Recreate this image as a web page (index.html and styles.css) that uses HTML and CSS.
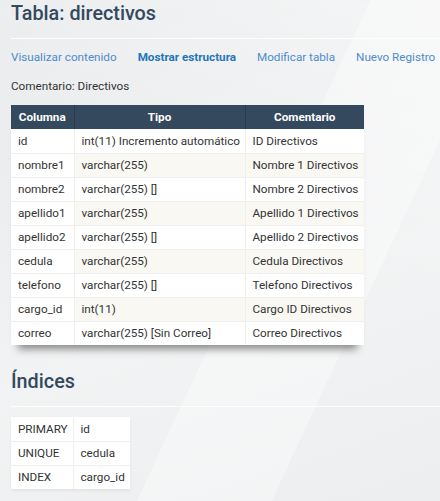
FILE: index.html
```html
<!DOCTYPE html>
<html lang="es">
<head>
<meta charset="utf-8">
<title>Tabla: directivos</title>
<link rel="stylesheet" href="styles.css">
</head>
<body>
<div class="page">
  <h1 class="title">Tabla: directivos</h1>
  <nav class="tabs">
    <a class="tab">Visualizar contenido</a>
    <a class="tab active">Mostrar estructura</a>
    <a class="tab">Modificar tabla</a>
    <a class="tab">Nuevo Registro</a>
  </nav>
  <p class="comment">Comentario: Directivos</p>
  <table class="grid structure">
    <thead>
      <tr><th class="c1">Columna</th><th class="c2">Tipo</th><th class="c3">Comentario</th></tr>
    </thead>
    <tbody>
      <tr><td>id</td><td>int(11) Incremento automático</td><td>ID Directivos</td></tr>
      <tr><td>nombre1</td><td>varchar(255)</td><td>Nombre 1 Directivos</td></tr>
      <tr><td>nombre2</td><td>varchar(255) []</td><td>Nombre 2 Directivos</td></tr>
      <tr><td>apellido1</td><td>varchar(255)</td><td>Apellido 1 Directivos</td></tr>
      <tr><td>apellido2</td><td>varchar(255) []</td><td>Apellido 2 Directivos</td></tr>
      <tr><td>cedula</td><td>varchar(255)</td><td>Cedula Directivos</td></tr>
      <tr><td>telefono</td><td>varchar(255) []</td><td>Telefono Directivos</td></tr>
      <tr><td>cargo_id</td><td>int(11)</td><td>Cargo ID Directivos</td></tr>
      <tr><td>correo</td><td>varchar(255) [Sin Correo]</td><td>Correo Directivos</td></tr>
    </tbody>
  </table>
  <h2 class="title section">Índices</h2>
  <table class="grid indexes">
    <tbody>
      <tr><td class="k">PRIMARY</td><td class="v">id</td></tr>
      <tr><td class="k">UNIQUE</td><td class="v">cedula</td></tr>
      <tr><td class="k">INDEX</td><td class="v">cargo_id</td></tr>
    </tbody>
  </table>
</div>
</body>
</html>
```

FILE: styles.css
```css
html, body {
  margin: 0;
  padding: 0;
}
body {
  font-family: Roboto, "Liberation Sans", sans-serif;
  color: #333;
  background-color: #eceeef;
  background-image:
    linear-gradient(115deg, rgba(255,255,255,0) 55%, rgba(255,255,255,0.35) 55%, rgba(255,255,255,0.35) 75%, rgba(255,255,255,0) 75%),
    linear-gradient(200deg, rgba(255,255,255,0.45) 0%, rgba(255,255,255,0) 45%),
    linear-gradient(160deg, rgba(0,0,0,0.02) 0%, rgba(0,0,0,0) 30%, rgba(255,255,255,0.3) 60%, rgba(255,255,255,0) 100%);
  min-height: 501px;
}
.page {
  padding: 0 0 0 11px;
}
.title {
  margin: 0;
  font-size: 19.8px;
  line-height: 24px;
  font-weight: 500;
  color: #34495e;
  padding: 2px 0 12px;
  border-bottom: 1px solid rgba(255,255,255,0.85);
}
.tabs {
  display: flex;
  gap: 21px;
  margin-top: 8px;
  font-size: 11.7px;
  line-height: 20px;
  white-space: nowrap;
}
.tab {
  color: #4f8ccc;
  text-decoration: none;
}
.tab.active {
  color: #2475b8;
  font-weight: bold;
}
.comment {
  margin: 9px 0 0;
  font-size: 11.7px;
  line-height: 20px;
  color: #333;
}
.grid {
  border-collapse: collapse;
  table-layout: fixed;
  font-size: 11.7px;
  background: #fff;
}
.grid td, .grid th {
  height: 24px;
  padding: 0 0 0 7px;
  text-align: left;
  white-space: nowrap;
  overflow: visible;
  box-sizing: border-box;
}
.grid td {
  border-top: 1px solid #f0efec;
  border-left: 1px solid #f0efec;
}
.grid td:first-child {
  border-left: none;
}
.structure {
  width: 353px;
  margin-top: 9px;
  box-shadow: 0 11px 8px -7px rgba(0,0,0,0.45);
}
.structure th {
  background: #34495e;
  color: #fff;
  font-weight: bold;
  text-align: center;
  padding: 0;
  border-left: 1px solid #2a3a4b;
}
.structure th:first-child {
  border-left: none;
}
.structure .c1 { width: 63px; }
.structure .c2 { width: 171px; }
.structure .c3 { width: 119px; }
.structure tbody tr:nth-child(even) td {
  background: #f9f8f3;
}
.structure tbody tr:nth-child(even) td:first-child {
  background: #fff;
}
.structure tbody tr:first-child td {
  border-top: none;
}
.section {
  margin-top: 23px;
}
.indexes {
  width: 119px;
  margin-top: 10px;
  box-shadow: 0 2px 3px rgba(0,0,0,0.06);
}
.indexes .k {
  width: 62px;
}
.indexes .v {
  width: 57px;
}
.indexes tr:first-child td {
  border-top: none;
}
```
